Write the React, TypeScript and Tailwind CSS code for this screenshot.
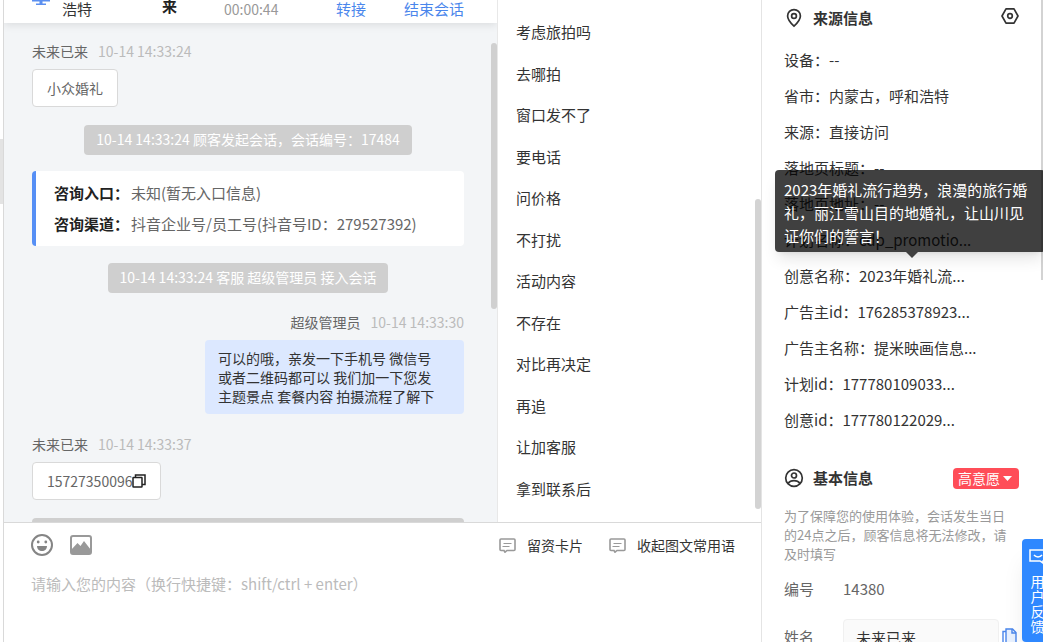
import { ReactNode } from 'react';

const phrases = [
  '考虑旅拍吗',
  '去哪拍',
  '窗口发不了',
  '要电话',
  '问价格',
  '不打扰',
  '活动内容',
  '不存在',
  '对比再决定',
  '再追',
  '让加客服',
  '拿到联系后',
];

const sourceInfo = [
  { label: '设备', value: '--' },
  { label: '省市', value: '内蒙古，呼和浩特' },
  { label: '来源', value: '直接访问' },
  { label: '落地页标题', value: '--' },
  { label: '落地页地址', value: '--' },
  { label: '计划名称', value: 'cdp_promotio...' },
  {
    label: '创意名称',
    value: '2023年婚礼流...',
    tip: '2023年婚礼流行趋势，浪漫的旅行婚礼，丽江雪山目的地婚礼，让山川见证你们的誓言！',
  },
  { label: '广告主id', value: '176285378923...' },
  { label: '广告主名称', value: '提米映画信息...' },
  { label: '计划id', value: '177780109033...' },
  { label: '创意id', value: '177780122029...' },
];

function SmileIcon() {
  return (
    <svg width="22" height="22" viewBox="0 0 22 22" fill="none">
      <circle cx="11" cy="11" r="10" stroke="#858585" strokeWidth="2" />
      <circle cx="7.2" cy="8" r="1.4" fill="#858585" />
      <circle cx="14.8" cy="8" r="1.4" fill="#858585" />
      <path d="M6 12h10c0 3-2.2 5-5 5s-5-2-5-5z" fill="#858585" />
    </svg>
  );
}

function PictureIcon() {
  return (
    <svg width="22" height="20" viewBox="0 0 22 20" fill="none">
      <rect x="1" y="1" width="20" height="18" rx="2" stroke="#999" strokeWidth="2" />
      <path d="M1 15 7.500 8l3 3L14 6l7 9v4H1z" fill="#999" />
    </svg>
  );
}

function CardIcon() {
  return (
    <svg width="17" height="15" viewBox="0 0 17 15" fill="none" stroke="#999">
      <path d="M2 1h13a1 1 0 0 1 1 1v9.5a1 1 0 0 1-1 1H8L6 14.2 5 12.5H2a1 1 0 0 1-1-1V2a1 1 0 0 1 1-1z" strokeWidth="1.6" />
      <path d="M4.5 5.5h8M3.5 8.5h7" strokeWidth="1.2" />
    </svg>
  );
}

function PinIcon() {
  return (
    <svg width="20" height="20" viewBox="0 0 20 20" fill="none" stroke="#333" strokeWidth="1.7">
      <path d="M10 18.2C6 14.5 3.6 11.6 3.6 8a6.4 6.4 0 0 1 12.8 0c0 3.6-2.4 6.5-6.4 10.2z" />
      <circle cx="10" cy="8" r="2.4" />
    </svg>
  );
}

function UserIcon() {
  return (
    <svg width="20" height="20" viewBox="0 0 20 20" fill="none" stroke="#333" strokeWidth="1.7">
      <circle cx="10" cy="10" r="8.3" />
      <circle cx="10" cy="7.5" r="2.5" />
      <path d="M4 15.5c1.5-2 3.5-2.8 6-2.8s4.5.8 6 2.8" />
    </svg>
  );
}

function HexIcon() {
  return (
    <svg width="18" height="16" viewBox="0 0 18 16" fill="none" stroke="#333" strokeWidth="1.7">
      <path d="M5 .9h8L17 8l-4 7.1H5L1 8z" strokeLinejoin="round" />
      <circle cx="9" cy="8" r="2.3" />
    </svg>
  );
}

function CopyIcon() {
  return (
    <svg width="14" height="14" viewBox="0 0 14 14" fill="none" stroke="#222" strokeWidth="1.5">
      <rect x="1" y="3.5" width="9" height="9.5" rx=".5" />
      <path d="M3.5 3.5V1H13v9.5h-3" />
    </svg>
  );
}

function PagesIcon() {
  return (
    <svg width="15" height="18" viewBox="0 0 15 18" fill="none" stroke="#4a86ec" strokeWidth="1.4">
      <path d="M4 3.5H1V17h9v-1.5" />
      <path d="M4 1h6.500L14 4.500V15H4z" fill="#e8f1ff" />
      <path d="M10 1v4h4" />
    </svg>
  );
}

function MessageMeta({ name, time, right }: { name: string; time: string; right?: boolean }) {
  return (
    <div className={`flex gap-[10px] text-sm leading-5 ${right ? 'justify-end' : ''}`}>
      <span className="text-[#666]">{name}</span>
      <span className="text-[#bbb]">{time}</span>
    </div>
  );
}

function Notice({ children }: { children: ReactNode }) {
  return (
    <div className="text-center">
      <p className="inline-block rounded-sm bg-[#cfcfcf] px-3 pb-[2px] align-top text-sm leading-7 text-white">{children}</p>
    </div>
  );
}

function Bubble({ children }: { children: ReactNode }) {
  return (
    <div className="mt-2 flex h-[38px] w-fit items-center rounded border border-[#d9d9d9] bg-white px-[14px] text-sm text-[#666]">
      {children}
    </div>
  );
}

function ChatPanel() {
  return (
    <section className="relative flex min-w-0 flex-1 flex-col overflow-hidden bg-[#f3f5f7]">
      <header className="relative flex h-[23px] shrink-0 items-start bg-white pr-[33px] pl-7 text-[15px] leading-[18px] shadow-[0_2px_8px_rgba(0,0,0,0.1)]">
        <svg className="mr-3" width="18" height="6" viewBox="0 0 18 6" fill="#5b8ff0">
          <path d="M0 0h18v1.5H0zM7.500 1h3v3h-3zM4 3.500h10V5H4z" />
        </svg>
        <span className="w-[100px] text-[#333]">浩特</span>
        <span className="w-[62px] leading-3 font-bold text-[#222]">来</span>
        <span className="flex-1 text-sm leading-[18px] text-[#999]">00:00:44</span>
        <div className="flex gap-[38px] text-[#4a86ec]">
          <button type="button">转接</button>
          <button type="button">结束会话</button>
        </div>
      </header>

      <div className="min-h-0 flex-1 overflow-hidden pt-[18px] pr-[33px] pl-7">
        <MessageMeta name="未来已来" time="10-14 14:33:24" />
        <Bubble>小众婚礼</Bubble>

        <div className="mt-[18px] mb-4">
          <Notice>10-14 14:33:24 顾客发起会话，会话编号：17484</Notice>
        </div>

        <div className="rounded-sm border-l-4 border-[#568ff5] bg-white pt-[6px] pb-[7px] pl-[18px] text-[15px] leading-[31px]">
          <p>
            <b className="mr-[2px] text-[#222]">咨询入口：</b>
            <span className="text-[#666]">未知(暂无入口信息)</span>
          </p>
          <p>
            <b className="mr-[2px] text-[#222]">咨询渠道：</b>
            <span className="text-[#666]">抖音企业号/员工号(抖音号ID：279527392)</span>
          </p>
        </div>

        <div className="mt-[17px] mb-[19px]">
          <Notice>10-14 14:33:24 客服 超级管理员 接入会话</Notice>
        </div>

        <MessageMeta name="超级管理员" time="10-14 14:33:30" right />
        <div className="mt-2 mb-5 ml-auto w-[259px] rounded bg-[#dce8ff] px-[13px] pt-[9px] pb-2 text-sm leading-[19px] text-[#333]">
          可以的哦，亲发一下手机号 微信号
          <br />
          或者二维码都可以 我们加一下您发
          <br />
          主题景点 套餐内容 拍摄流程了解下
        </div>

        <MessageMeta name="未来已来" time="10-14 14:33:37" />
        <Bubble>
          15727350096
          <button type="button" aria-label="复制">
            <CopyIcon />
          </button>
        </Bubble>

        <div className="mt-[18px] h-[30px] rounded-sm bg-[#cfcfcf]" />
      </div>

      <div className="absolute top-[43px] right-0 h-[266px] w-[6px] rounded-full bg-[#d0d0d0]" />
    </section>
  );
}

function PhraseList() {
  return (
    <section className="relative w-[264px] shrink-0 border-l border-[#e8e8e8]">
      <ul className="flex h-full flex-col justify-between pt-[21px] pb-[23px] pl-[18px] text-[15px] leading-[21px] text-[#333]">
        {phrases.map((phrase) => (
          <li key={phrase}>{phrase}</li>
        ))}
      </ul>
      <div className="absolute right-0 bottom-[13px] h-[310px] w-[6px] rounded-full bg-[#d3d3d3]" />
    </section>
  );
}

function Editor() {
  return (
    <section className="flex h-[120px] shrink-0 flex-col border-t border-[#d9d9d9] bg-white">
      <div className="flex h-11 items-center pr-[26px] pl-[27px]">
        <button type="button" aria-label="表情" className="mr-[17px]">
          <SmileIcon />
        </button>
        <button type="button" aria-label="图片">
          <PictureIcon />
        </button>
        <div className="ml-auto flex gap-[26px] text-sm text-[#333]">
          <button type="button" className="flex items-center gap-[11px]">
            <CardIcon />
            留资卡片
          </button>
          <button type="button" className="flex items-center gap-[11px]">
            <CardIcon />
            收起图文常用语
          </button>
        </div>
      </div>
      <textarea
        aria-label="消息内容"
        className="flex-1 resize-none px-[27px] pt-[7px] text-[15px] leading-5 outline-none placeholder:text-[#bbb]"
        placeholder="请输入您的内容（换行快捷键：shift/ctrl + enter）"
      />
    </section>
  );
}

function CustomerPanel() {
  return (
    <aside className="relative w-[282px] shrink-0 overflow-hidden border-l border-[#e4e4e4] bg-white text-[15px] text-[#333]">
      <div className="pr-6 pl-[22px]">
        <div className="flex h-9 items-center">
          <PinIcon />
          <h2 className="ml-[9px] font-bold">来源信息</h2>
          <button type="button" aria-label="设置" className="ml-auto pb-1">
            <HexIcon />
          </button>
        </div>

        <ul className="pt-[6px]">
          {sourceInfo.map((item) => (
            <li key={item.label} className="relative h-9 leading-9 whitespace-nowrap">
              {item.label}：{item.value}
              {item.tip && (
                <div
                  role="tooltip"
                  className="absolute bottom-[42px] -left-[9px] z-10 w-[270px] rounded-sm bg-black/75 pt-2 pr-[11px] pb-[5px] pl-[9px] leading-[23px] whitespace-normal text-white shadow-lg"
                >
                  {item.tip}
                  <svg className="absolute top-full left-[131px]" width="12" height="6" viewBox="0 0 12 6" fill="#404040">
                    <path d="M0 0h12L6 6z" />
                  </svg>
                </div>
              )}
            </li>
          ))}
        </ul>

        <div className="mt-[29px] flex h-[22px] items-center">
          <UserIcon />
          <h2 className="ml-[9px] font-bold">基本信息</h2>
          <button type="button" className="ml-auto flex items-center gap-[3px] rounded-sm bg-[#ff4d58] pr-[6px] pl-[5px] text-sm leading-[21px] text-white">
            高意愿
            <svg width="10" height="5" viewBox="0 0 10 5" fill="#fff">
              <path d="M0 0h9L4.500 5z" />
            </svg>
          </button>
        </div>

        <p className="mt-[17px] w-[230px] text-[13px] leading-[19px] text-[#999]">
          为了保障您的使用体验，会话发生当日的24点之后，顾客信息将无法修改，请及时填写
        </p>

        <div className="mt-4 flex h-5 items-center text-[#666]">
          <span className="w-[59px]">编号</span>
          <span>14380</span>
        </div>

        <div className="mt-5 flex h-9 items-center">
          <label htmlFor="name" className="w-[59px] shrink-0 text-[#666]">
            姓名
          </label>
          <input
            id="name"
            defaultValue="未来已来"
            className="h-9 w-[156px] shrink-0 rounded-sm border border-[#f0f0f0] bg-[#fafafa] px-3 outline-none"
          />
          <button type="button" aria-label="复制姓名" className="ml-[3px] shrink-0">
            <PagesIcon />
          </button>
        </div>
      </div>

      <div className="absolute top-0 right-0 h-[280px] w-[2px] bg-[#d3d3d3]" />
      <button
        type="button"
        className="absolute -right-[10px] bottom-0 flex w-[31px] flex-col items-center rounded-l bg-[#2f88ff] pt-[10px] pb-2 text-sm leading-[15px] text-white shadow-xl"
      >
        <svg className="mb-[10px]" width="18" height="15" viewBox="0 0 18 15" fill="none" stroke="#fff" strokeWidth="1.5">
          <path d="M1 1h16v11h-3v2l-3-2H1z" />
          <path d="M5 6c2 2.500 6 2.500 8 0" />
        </svg>
        <span className="w-[14px]">用户反馈</span>
      </button>
    </aside>
  );
}

export default function App() {
  return (
    <div lang="zh-CN" className="flex h-screen overflow-hidden bg-white font-['Noto_Sans_CJK_SC',sans-serif]">
      <div className="w-1 shrink-0 border-r border-[#d9d9d9] pt-[139px]">
        <div className="h-[65px] bg-[#e3e3e3]" />
      </div>
      <main className="flex min-w-0 flex-1 flex-col">
        <div className="flex min-h-0 flex-1">
          <ChatPanel />
          <PhraseList />
        </div>
        <Editor />
      </main>
      <CustomerPanel />
    </div>
  );
}
